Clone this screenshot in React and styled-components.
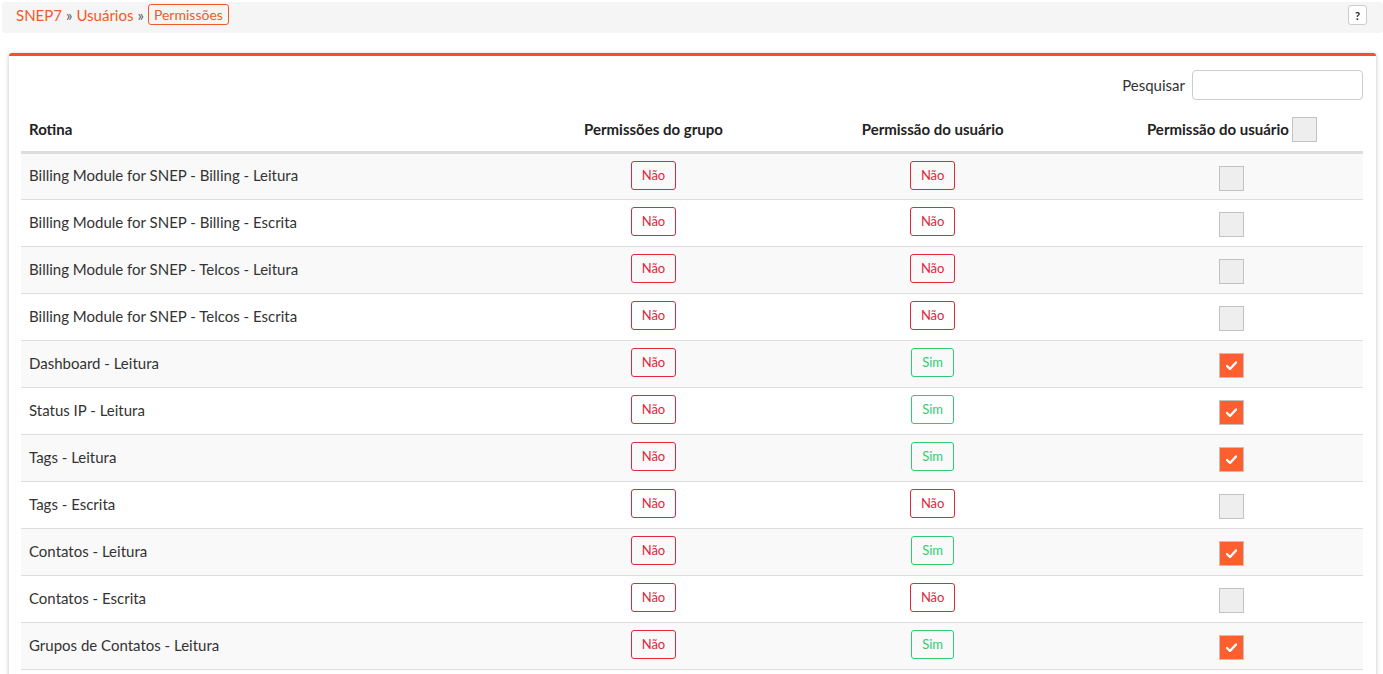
import React from 'react'
import styled, { createGlobalStyle } from 'styled-components'

const GlobalStyle = createGlobalStyle`
    * { box-sizing: border-box; }
    body {
        margin: 0;
        background: #fff;
        font-family: Lato, "Noto Sans", sans-serif;
        color: #333;
    }
`

const Page = styled.div`
    padding: 2px 0 0 2px;
`

const BreadcrumbBar = styled.div`
    height: 31px;
    background: #f5f5f5;
    border-radius: 3px;
    display: flex;
    align-items: flex-start;
    justify-content: space-between;
    padding: 2px 16px 0 14px;
`

const Crumbs = styled.div`
    display: flex;
    align-items: center;
    font-size: 15px;
    height: 21px;
    gap: 4px;
    color: #555;
`

const CrumbLink = styled.a`
    color: #ef5a2a;
    text-decoration: none;
`

const CrumbActive = styled.span`
    color: #ef5a2a;
    border: 1px solid #ef5a2a;
    border-radius: 3px;
    padding: 0 5px;
    height: 21px;
    line-height: 19px;
    font-size: 14px;
`

const HelpButton = styled.button`
    width: 19px;
    height: 20px;
    margin-top: 1px;
    border: 1px solid #ccc;
    border-radius: 3px;
    background: #fff;
    font-size: 11px;
    font-weight: 700;
    padding: 0;
    font-family: inherit;
    color: #222;
`

const Panel = styled.div`
    margin: 20px 7px 0 7px;
    background: #fff;
    border-top: 3px solid #f05423;
    border-radius: 3px 3px 0 0;
    box-shadow: 0 1px 4px rgba(0, 0, 0, 0.25);
    padding: 14px 13px 0 12px;
`

const SearchRow = styled.div`
    display: flex;
    justify-content: flex-end;
    align-items: center;
    gap: 7px;
    font-size: 15px;
    color: #333;
`

const SearchInput = styled.input`
    width: 171px;
    height: 30px;
    border: 1px solid #ccc;
    border-radius: 4px;
`

const Table = styled.table`
    width: 100%;
    margin-top: 10px;
    border-collapse: collapse;
    table-layout: fixed;
    font-size: 15px;
`

const Th = styled.th`
    height: 42px;
    padding: 0 8px 2px;
    font-weight: 700;
    text-align: ${p => p.$align || 'center'};
    border-bottom: 3px solid #ddd;
    color: #222;
    vertical-align: middle;
`

const HeadCheckWrap = styled.span`
    display: inline-flex;
    align-items: center;
    gap: 3px;
`

const Row = styled.tr`
    background: ${p => p.$odd ? '#f9f9f9' : '#fff'};
    border-bottom: 1px solid #ddd;
`

const Td = styled.td`
    height: 47px;
    padding: 0 8px 2px;
    text-align: ${p => p.$align || 'center'};
    vertical-align: middle;
    color: #333;
`

const Badge = styled.span`
    display: inline-block;
    width: ${p => p.$yes ? '43px' : '45px'};
    height: 29px;
    line-height: 27px;
    text-align: center;
    font-size: 13px;
    border-radius: 3px;
    border: 1px solid ${p => p.$yes ? '#2ecc71' : '#e0283c'};
    color: ${p => p.$yes ? '#2ecc71' : '#e0283c'};
`

const Check = styled.span`
    display: inline-flex;
    align-items: center;
    justify-content: center;
    width: 25px;
    height: 25px;
    border: 1px solid #c2c2c2;
    background: ${p => p.$checked ? '#ff5f2e' : '#eee'};
    vertical-align: middle;
    margin-top: ${p => p.$head ? '0' : '6px'};
`

const CheckMark = () => (
    <svg width="11" height="9" viewBox="0 0 11 9">
        <path d="M1 5 L4 8 L10 1.5" fill="none" stroke="#fff" strokeWidth="2.4" strokeLinecap="round" strokeLinejoin="round" />
    </svg>
)

const rows = [
    ['Billing Module for SNEP - Billing - Leitura', false],
    ['Billing Module for SNEP - Billing - Escrita', false],
    ['Billing Module for SNEP - Telcos - Leitura', false],
    ['Billing Module for SNEP - Telcos - Escrita', false],
    ['Dashboard - Leitura', true],
    ['Status IP - Leitura', true],
    ['Tags - Leitura', true],
    ['Tags - Escrita', false],
    ['Contatos - Leitura', true],
    ['Contatos - Escrita', false],
    ['Grupos de Contatos - Leitura', true],
    ['Grupos de Contatos - Escrita', false],
]

export default function App() {
    return (
        <Page>
            <GlobalStyle />
            <BreadcrumbBar>
                <Crumbs>
                    <CrumbLink href="#">SNEP7</CrumbLink>
                    <span>»</span>
                    <CrumbLink href="#">Usuários</CrumbLink>
                    <span>»</span>
                    <CrumbActive>Permissões</CrumbActive>
                </Crumbs>
                <HelpButton>?</HelpButton>
            </BreadcrumbBar>
            <Panel>
                <SearchRow>
                    <label>Pesquisar</label>
                    <SearchInput type="text" />
                </SearchRow>
                <Table>
                    <colgroup>
                        <col style={{ width: '521px' }} />
                        <col style={{ width: '222px' }} />
                        <col style={{ width: '336px' }} />
                        <col style={{ width: '262px' }} />
                    </colgroup>
                    <thead>
                        <tr>
                            <Th $align="left">Rotina</Th>
                            <Th>Permissões do grupo</Th>
                            <Th>Permissão do usuário</Th>
                            <Th>
                                <HeadCheckWrap>
                                    Permissão do usuário
                                    <Check $head />
                                </HeadCheckWrap>
                            </Th>
                        </tr>
                    </thead>
                    <tbody>
                        {rows.map(([name, yes], i) => (
                            <Row key={name} $odd={i % 2 === 0}>
                                <Td $align="left">{name}</Td>
                                <Td><Badge>Não</Badge></Td>
                                <Td><Badge $yes={yes}>{yes ? 'Sim' : 'Não'}</Badge></Td>
                                <Td><Check $checked={yes}>{yes && <CheckMark />}</Check></Td>
                            </Row>
                        ))}
                    </tbody>
                </Table>
            </Panel>
        </Page>
    )
}
